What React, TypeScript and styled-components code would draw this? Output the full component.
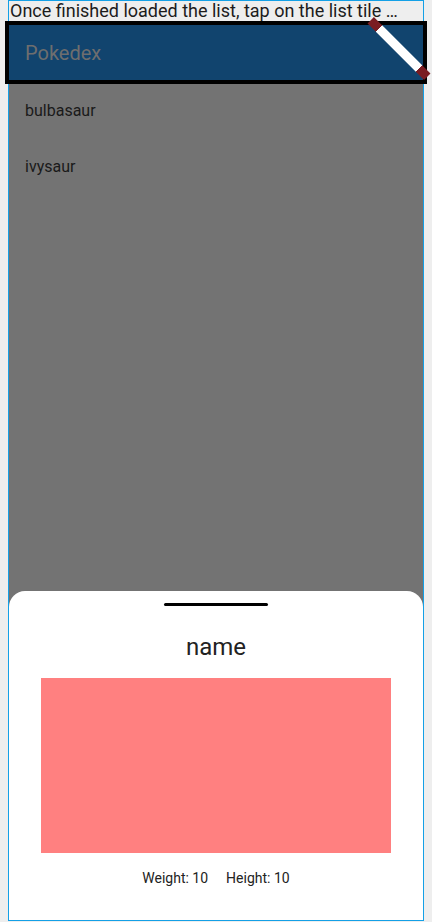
import React from "react";
import styled, { createGlobalStyle } from "styled-components";

const Global = createGlobalStyle`
  html, body { margin: 0; padding: 0; background: #eeeeee; }
  body { font-family: Roboto, "Liberation Sans", sans-serif; }
  * { box-sizing: border-box; }
`;

const Frame = styled.div`
  position: relative;
  margin-left: 8px;
  width: 416px;
  height: 921px;
  border: 1px solid #14a0e6;
  background: #eeeeee;
  display: flex;
  flex-direction: column;
`;

const Caption = styled.div`
  height: 20px;
  line-height: 20px;
  padding-left: 1px;
  font-size: 18px;
  color: #1c1c1c;
  white-space: nowrap;
  overflow: hidden;
`;

const AppBar = styled.header`
  margin: 0 -4px;
  height: 63px;
  border: 4px solid #000;
  background: #11446e;
  display: flex;
  align-items: center;
  padding-left: 16px;
`;

const Title = styled.h1`
  margin: 0;
  font-size: 20px;
  font-weight: 400;
  color: #6e6e6e;
`;

const Body = styled.main`
  flex: 1;
  display: flex;
  flex-direction: column;
  background: #737373;
`;

const List = styled.ul`
  flex: 1;
  margin: 0;
  padding: 0;
  list-style: none;
`;

const Tile = styled.li`
  height: 56px;
  display: flex;
  align-items: center;
  padding: 0 0 4px 16px;
  font-size: 16px;
  color: #1a1a1a;
`;

const Sheet = styled.section`
  height: 329px;
  background: #fff;
  border-radius: 16px 16px 0 0;
  display: flex;
  flex-direction: column;
  align-items: center;
`;

const Handle = styled.div`
  margin-top: 12px;
  width: 104px;
  height: 3px;
  border-radius: 2px;
  background: #000;
`;

const Name = styled.h2`
  margin: 27px 0 0;
  font-size: 24px;
  line-height: 28px;
  font-weight: 400;
  color: #222;
`;

const Picture = styled.div`
  margin-top: 17px;
  width: 350px;
  height: 175px;
  background: #ff8080;
`;

const Stats = styled.div`
  margin-top: 15px;
  display: flex;
  gap: 18px;
  font-size: 14px;
  line-height: 20px;
  color: #222;
`;

const Banner = styled.div`
  position: absolute;
  left: 350px;
  top: 43px;
  width: 80px;
  height: 9px;
  transform: rotate(45deg);
  background: linear-gradient(
    to right,
    #7a1c22 0 12px,
    #ffffff 12px calc(100% - 12px),
    #7a1c22 calc(100% - 12px)
  );
`;

export default function App() {
  return (
    <>
      <Global />
      <Frame>
        <Caption>Once finished loaded the list, tap on the list tile …</Caption>
        <AppBar>
          <Title>Pokedex</Title>
        </AppBar>
        <Body>
          <List>
            <Tile>bulbasaur</Tile>
            <Tile>ivysaur</Tile>
          </List>
          <Sheet>
            <Handle />
            <Name>name</Name>
            <Picture />
            <Stats>
              <span>Weight: 10</span>
              <span>Height: 10</span>
            </Stats>
          </Sheet>
        </Body>
        <Banner />
      </Frame>
    </>
  );
}
